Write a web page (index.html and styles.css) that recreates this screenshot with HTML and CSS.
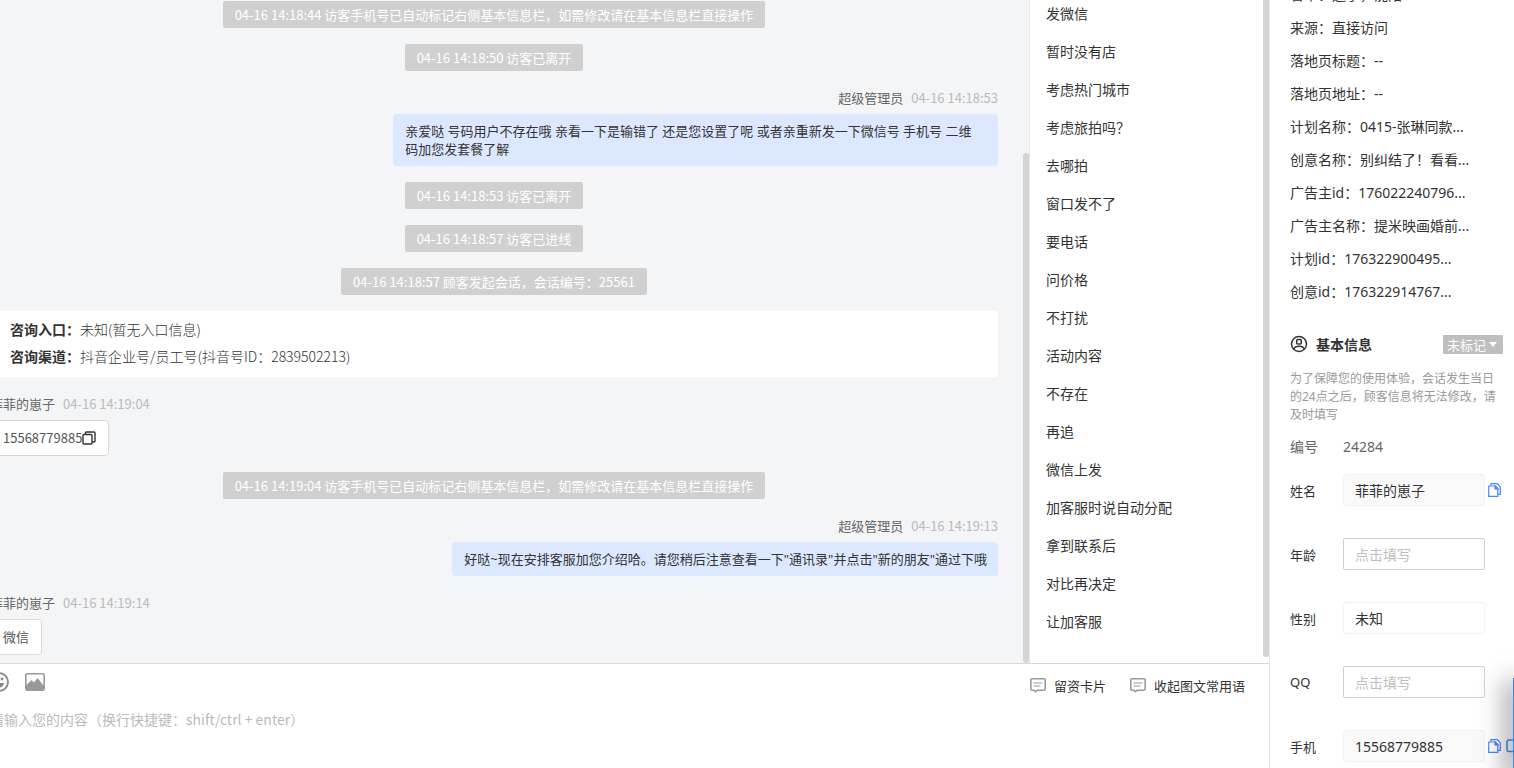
FILE: index.html
```html
<!DOCTYPE html>
<html lang="zh-CN">
<head>
<meta charset="UTF-8">
<meta name="viewport" content="width=device-width, initial-scale=1.0">
<title>在线客服</title>
<link rel="stylesheet" href="styles.css">
</head>
<body>
<div class="app">
    <main class="workspace">
        <div class="upper">
            <section class="chat">
                <div class="messages">
                    <p class="notice">04-16 14:18:44 访客手机号已自动标记右侧基本信息栏，如需修改请在基本信息栏直接操作</p>
                    <p class="notice">04-16 14:18:50 访客已离开</p>
                    <div class="message mine">
                        <div class="meta"><span class="name">超级管理员</span><time>04-16 14:18:53</time></div>
                        <div class="bubble">亲爱哒 号码用户不存在哦 亲看一下是输错了 还是您设置了呢 或者亲重新发一下微信号 手机号 二维<br>码加您发套餐了解</div>
                    </div>
                    <p class="notice">04-16 14:18:53 访客已离开</p>
                    <p class="notice">04-16 14:18:57 访客已进线</p>
                    <p class="notice">04-16 14:18:57 顾客发起会话，会话编号：25561</p>
                    <div class="entry-card">
                        <div><b>咨询入口：</b>未知(暂无入口信息)</div>
                        <div><b>咨询渠道：</b>抖音企业号/员工号(抖音号ID：2839502213)</div>
                    </div>
                    <div class="message">
                        <div class="meta"><span class="name">菲菲的崽子</span><time>04-16 14:19:04</time></div>
                        <div class="bubble">15568779885<button class="copy-inline" aria-label="复制"><svg width="14" height="14" viewBox="0 0 14 14" fill="none" stroke="#333" stroke-width="1.4"><rect x="1" y="3.5" width="9" height="9.5" rx="1"/><path d="M3.5 3.5V1.7q0-.7.7-.7H12q1 0 1 1v8q0 1-1 1h-2"/></svg></button></div>
                    </div>
                    <p class="notice">04-16 14:19:04 访客手机号已自动标记右侧基本信息栏，如需修改请在基本信息栏直接操作</p>
                    <div class="message mine">
                        <div class="meta"><span class="name">超级管理员</span><time>04-16 14:19:13</time></div>
                        <div class="bubble">好哒~现在安排客服加您介绍哈。请您稍后注意查看一下"通讯录"并点击"新的朋友"通过下哦</div>
                    </div>
                    <div class="message">
                        <div class="meta"><span class="name">菲菲的崽子</span><time>04-16 14:19:14</time></div>
                        <div class="bubble">微信</div>
                    </div>
                </div>
                <div class="thumb chat-thumb"></div>
            </section>
            <aside class="phrases">
                <ul>
                    <li>发微信</li>
                    <li>暂时没有店</li>
                    <li>考虑热门城市</li>
                    <li>考虑旅拍吗？</li>
                    <li>去哪拍</li>
                    <li>窗口发不了</li>
                    <li>要电话</li>
                    <li>问价格</li>
                    <li>不打扰</li>
                    <li>活动内容</li>
                    <li>不存在</li>
                    <li>再追</li>
                    <li>微信上发</li>
                    <li>加客服时说自动分配</li>
                    <li>拿到联系后</li>
                    <li>对比再决定</li>
                    <li>让加客服</li>
                </ul>
                <div class="thumb phrase-thumb"></div>
            </aside>
        </div>
        <footer class="composer">
            <div class="toolbar">
                <button class="tool" aria-label="表情"><svg width="20" height="20" viewBox="0 0 20 20"><circle cx="10" cy="10" r="9" fill="none" stroke="#888" stroke-width="1.8"/><circle cx="7" cy="7" r="1.4" fill="#888"/><circle cx="13" cy="7" r="1.4" fill="#888"/><path d="M5 11h10q-.8 4.5-5 4.5T5 11z" fill="#888"/></svg></button>
                <button class="tool" aria-label="图片"><svg width="20" height="18" viewBox="0 0 20 18"><rect x=".8" y=".8" width="18.4" height="16.4" rx="2" fill="#fff" stroke="#999" stroke-width="1.6"/><path d="M1 12.500l5.500-5.500 2.500 2.500L12.500 5l6.500 8v4H1z" fill="#999"/></svg></button>
                <div class="tool-links">
                    <button class="tool-link"><svg width="16" height="15" viewBox="0 0 16 15" fill="none" stroke="#999" stroke-width="1.6"><path d="M2 .8h12q1.200 0 1.200 1.200v9q0 1.200-1.200 1.200H7L5.500 13.700 4 12.200H2Q.8 12.200.8 11V2Q.8.8 2 .8z"/><path d="M3.500 5h9M3.500 8h7" stroke-width="1.100"/></svg>留资卡片</button>
                    <button class="tool-link"><svg width="16" height="15" viewBox="0 0 16 15" fill="none" stroke="#999" stroke-width="1.6"><path d="M2 .8h12q1.200 0 1.200 1.200v9q0 1.200-1.200 1.200H7L5.500 13.700 4 12.200H2Q.8 12.200.8 11V2Q.8.8 2 .8z"/><path d="M3.500 5h9M3.500 8h7" stroke-width="1.100"/></svg>收起图文常用语</button>
                </div>
            </div>
            <textarea class="editor" aria-label="输入内容" placeholder="请输入您的内容（换行快捷键：shift/ctrl + enter）"></textarea>
        </footer>
    </main>
    <aside class="visitor">
        <ul class="facts">
            <li>省市：辽宁，沈阳</li>
            <li>来源：直接访问</li>
            <li>落地页标题：--</li>
            <li>落地页地址：--</li>
            <li>计划名称：0415-张琳同款...</li>
            <li>创意名称：别纠结了！看看...</li>
            <li>广告主id：176022240796...</li>
            <li>广告主名称：提米映画婚前...</li>
            <li>计划id：176322900495...</li>
            <li>创意id：176322914767...</li>
        </ul>
        <div class="section-title">
            <svg width="18" height="18" viewBox="0 0 18 18" fill="none" stroke="#333" stroke-width="1.500"><circle cx="9" cy="9" r="7.500"/><rect x="6.700" y="4.500" width="4.600" height="4.500" rx="1"/><path d="M3.800 14q1-2.700 5.200-2.700t5.200 2.700"/></svg>
            <h2>基本信息</h2>
            <button class="mark">未标记<span class="caret"></span></button>
        </div>
        <p class="tip">为了保障您的使用体验，会话发生当日的24点之后，顾客信息将无法修改，请及时填写</p>
        <div class="serial"><span>编号</span><span>24284</span></div>
        <form class="fields">
            <div class="field">
                <label for="name">姓名</label>
                <input id="name" class="locked" type="text" value="菲菲的崽子" readonly>
                <button type="button" class="copy" aria-label="复制姓名"><svg width="13" height="14" viewBox="0 0 13 14" fill="none" stroke="#4a86ff" stroke-width="1.200"><path d="M.7 3h6.600l2.500 2.500v7.800H.7z"/><path d="M7 3v3h3z" fill="#4a86ff"/><path d="M3 2.800V.7h6.300l3 3v7.600H10"/></svg></button>
            </div>
            <div class="field">
                <label for="age">年龄</label>
                <input id="age" type="text" placeholder="点击填写">
            </div>
            <div class="field">
                <label for="gender">性别</label>
                <select id="gender" class="plain"><option>未知</option><option>男</option><option>女</option></select>
            </div>
            <div class="field">
                <label for="qq">QQ</label>
                <input id="qq" type="text" placeholder="点击填写">
            </div>
            <div class="field">
                <label for="phone">手机</label>
                <input id="phone" class="locked" type="text" value="15568779885" readonly>
                <button type="button" class="copy" aria-label="复制手机"><svg width="13" height="14" viewBox="0 0 13 14" fill="none" stroke="#4a86ff" stroke-width="1.200"><path d="M.7 3h6.600l2.500 2.500v7.800H.7z"/><path d="M7 3v3h3z" fill="#4a86ff"/><path d="M3 2.800V.7h6.300l3 3v7.600H10"/></svg></button>
                <button type="button" class="copy call" aria-label="拨打"><svg width="14" height="14" viewBox="0 0 14 14" fill="none" stroke="#4a90ff" stroke-width="1.600"><rect x="1" y="1" width="12" height="11.500" rx="2"/></svg></button>
            </div>
        </form>
        <div class="drawer"></div>
    </aside>
</div>
</body>
</html>
```

FILE: styles.css
```css
* {
    box-sizing: border-box;
}
body {
    margin: 0;
    font-family: "Noto Sans CJK SC", sans-serif;
    font-size: 13px;
    color: #333;
    background: #fff;
}
ul, p, h2 {
    margin: 0;
    padding: 0;
    list-style: none;
}
button {
    border: none;
    background: none;
    padding: 0;
    font: inherit;
    color: inherit;
    cursor: pointer;
}
svg {
    display: block;
    flex: none;
}
.app {
    display: grid;
    grid-template-columns: minmax(0, 1fr) 245px;
    height: 100vh;
    overflow: hidden;
}
.workspace {
    display: flex;
    flex-direction: column;
    min-height: 0;
}
.upper {
    display: flex;
    flex: 1;
    min-height: 0;
}

/* chat */
.chat {
    position: relative;
    flex: 1;
    min-width: 0;
    overflow: hidden;
    background: #f3f5f7;
}
.messages {
    display: flex;
    flex-direction: column;
    gap: 16px;
    margin-left: -10px;
    padding: 1px 31px 8px 0;
}
.notice {
    align-self: center;
    padding: 0 12px;
    border-radius: 2px;
    background: #d0d0d0;
    color: #fff;
    line-height: 27px;
}
.message {
    display: flex;
    flex-direction: column;
    align-items: flex-start;
    gap: 5px;
}
.mine {
    align-items: flex-end;
}
.meta {
    display: flex;
    gap: 8px;
    line-height: 22px;
    color: #666;
}
.meta time {
    color: #bbb;
}
.bubble {
    display: flex;
    align-items: center;
    max-width: 60%;
    padding: 8px 12px;
    border: 1px solid #d9d9d9;
    border-radius: 4px;
    background: #fff;
    color: #555;
    line-height: 18px;
}
.mine .bubble {
    display: block;
    padding-right: 11px;
    border: none;
    background: #dce8ff;
    color: #333;
    font-family: "Noto Sans", "Noto Sans CJK SC", sans-serif;
}
.mine .bubble:has(br) {
    width: 60%;
}
.entry-card {
    padding: 5px 20px 7px;
    background: #fff;
    border-radius: 2px;
    font-size: 14px;
    font-weight: 300;
    line-height: 27px;
}
.entry-card b {
    font-weight: 700;
}
.thumb {
    position: absolute;
    right: 0;
    width: 6px;
    border-radius: 3px;
    background: #d5d5d5;
}
.chat-thumb {
    top: 153px;
    bottom: 0;
}

/* quick phrases */
.phrases {
    position: relative;
    width: 240px;
    overflow: hidden;
    border-left: 1px solid #e6e6e6;
    font-size: 14px;
    line-height: 38px;
}
.phrases ul {
    margin-top: -6px;
    padding-left: 16px;
}
.phrase-thumb {
    top: -3px;
    bottom: 6px;
}

/* composer */
.composer {
    height: 105px;
    border-top: 1px solid #d9d9d9;
}
.toolbar {
    display: flex;
    align-items: center;
    gap: 16px;
    height: 36px;
    margin-left: -11px;
    padding-right: 24px;
}
.tool-links {
    display: flex;
    gap: 24px;
    margin: 6px 0 0 auto;
}
.tool-link {
    display: flex;
    align-items: center;
    gap: 8px;
}
.editor {
    display: block;
    width: 100%;
    height: 60px;
    margin-left: -10px;
    padding: 9px 0;
    border: none;
    outline: none;
    resize: none;
    font: 14px/20px "Noto Sans CJK SC", sans-serif;
}
.editor::placeholder {
    color: #bbb;
}

/* visitor info */
.visitor {
    position: relative;
    overflow: hidden;
    padding-left: 20px;
    border-left: 1px solid #e6e6e6;
    font-family: "Noto Sans", "Noto Sans CJK SC", sans-serif;
}
.facts {
    margin-top: -22px;
    font-size: 14px;
    line-height: 33px;
}
.section-title {
    display: flex;
    align-items: center;
    gap: 8px;
    height: 32px;
    margin-top: 20px;
    padding-right: 11px;
}
.section-title h2 {
    font-size: 14px;
}
.mark {
    display: flex;
    align-items: center;
    gap: 3px;
    height: 19px;
    margin-left: auto;
    padding: 0 6px 0 4px;
    border-radius: 1px;
    background: #bfbfbf;
    color: #fff;
}
.caret {
    border: 4px solid transparent;
    border-top: 5px solid #fff;
    border-bottom: none;
}
.tip {
    padding: 10px 16px 0 0;
    color: #999;
    font-size: 12px;
    line-height: 18px;
}
.serial {
    display: flex;
    gap: 25px;
    margin-top: 12px;
    color: #666;
    font-size: 14px;
    line-height: 22px;
}
.fields {
    display: grid;
    gap: 32px;
    margin-top: 16px;
}
.field {
    display: flex;
    align-items: center;
    gap: 3px;
}
.field label {
    flex: none;
    width: 50px;
}
.field input, .field select {
    width: 142px;
    height: 32px;
    padding: 0 11px;
    border: 1px solid #d0d0d0;
    border-radius: 2px;
    background: #fff;
    color: #333;
    font: inherit;
    font-size: 14px;
    outline: none;
    appearance: none;
}
.field input::placeholder {
    color: #bfbfbf;
}
.field .locked {
    background: #f9f9f9;
    border-color: #f2f2f2;
}
.field .plain {
    border-color: #f2f2f2;
}
.call {
    margin-left: 2px;
}
.drawer {
    position: absolute;
    right: 0;
    top: 678px;
    bottom: 0;
    width: 1px;
    background: #3a84ec;
    box-shadow: 0 8px 24px 6px rgba(0, 0, 0, 0.5);
}
```
